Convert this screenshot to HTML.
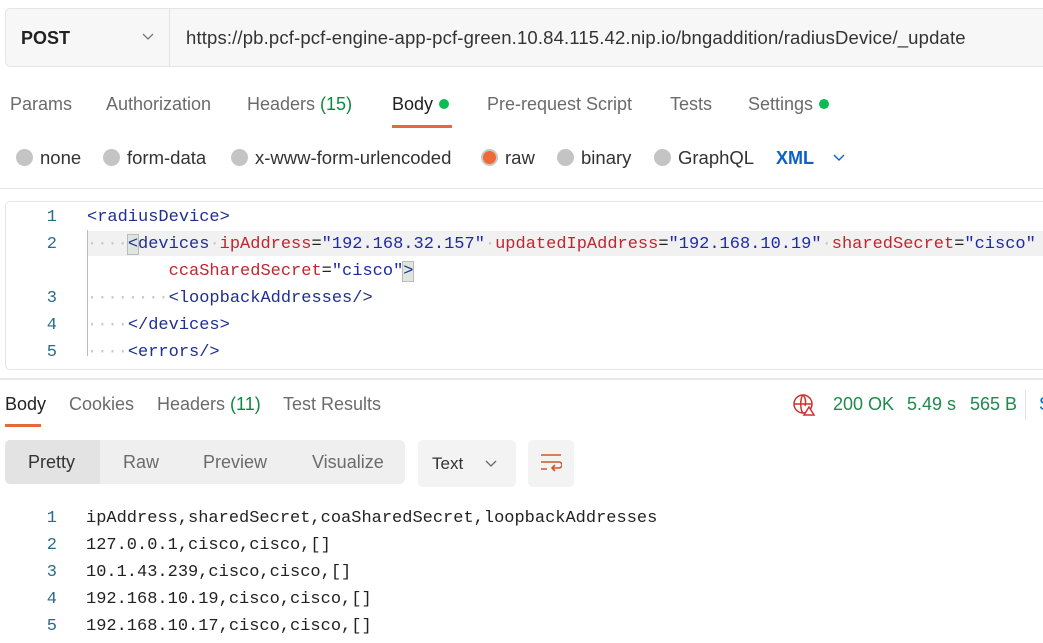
<!DOCTYPE html>
<html><head><meta charset="utf-8"><style>
*{margin:0;padding:0;box-sizing:border-box}
body{width:1043px;height:643px;overflow:hidden;background:#fff;font-family:"Liberation Sans",sans-serif;position:relative;color:#212121}
.a{position:absolute;white-space:nowrap}
.s{font-size:18px;line-height:20px}
.s2{font-size:18.5px;line-height:20px}
.g{color:#6b6b6b}
.m{font-family:"Liberation Mono",monospace;font-size:17px;line-height:27px;white-space:pre}
.ln{color:#2a6b8a;text-align:right;width:20px}
.t{color:#1f2f8f}.at{color:#c0262e}.v{color:#1c2aa8}
.dot{display:inline-block;width:10px;height:10px;border-radius:50%;background:#0cbb52;vertical-align:1px;margin-left:6px}
.r{position:absolute;width:17px;height:17px;border-radius:50%;background:#c4c4c4}
.ws{color:#c8c8c8}
</style></head><body>
<div class="a" style="left:5px;top:8px;width:1050px;height:59px;background:#f7f7f7;border:1px solid #e4e4e4;border-radius:5px"></div>
<div class="a" style="left:169px;top:9px;width:1px;height:57px;background:#e2e2e2"></div>
<div class="a s" style="left:21px;top:28px;font-weight:bold;color:#222">POST</div>
<svg class="a" style="left:142px;top:33px" width="12" height="8" viewBox="0 0 12 8"><path d="M1 1l5 5 5-5" fill="none" stroke="#777" stroke-width="1.3"/></svg>
<div class="a s2" style="left:186px;top:28px;color:#333;letter-spacing:0.15px">https://pb.pcf-pcf-engine-app-pcf-green.10.84.115.42.nip.io/bngaddition/radiusDevice/_update</div>

<div class="a s g" style="left:10px;top:94px">Params</div>
<div class="a s g" style="left:106px;top:94px">Authorization</div>
<div class="a s g" style="left:247px;top:94px">Headers <span style="color:#0a8a3f">(15)</span></div>
<div class="a s" style="left:392px;top:94px;color:#222">Body<span class="dot"></span></div>
<div class="a" style="left:392px;top:125px;width:60px;height:3px;background:#e5693c"></div>
<div class="a s g" style="left:487px;top:94px">Pre-request Script</div>
<div class="a s g" style="left:670px;top:94px">Tests</div>
<div class="a s g" style="left:748px;top:94px">Settings<span class="dot"></span></div>

<div class="r" style="left:16px;top:149px"></div><div class="a s2" style="left:40px;top:148px;color:#333">none</div>
<div class="r" style="left:103px;top:149px"></div><div class="a s2" style="left:127px;top:148px;color:#333">form-data</div>
<div class="r" style="left:231px;top:149px"></div><div class="a s2" style="left:255px;top:148px;color:#333">x-www-form-urlencoded</div>
<div class="r" style="left:481px;top:149px;background:#f06a35;border:2px solid #c8c8c8"></div><div class="a s2" style="left:505px;top:148px;color:#333">raw</div>
<div class="r" style="left:557px;top:149px"></div><div class="a s2" style="left:581px;top:148px;color:#333">binary</div>
<div class="r" style="left:654px;top:149px"></div><div class="a s2" style="left:678px;top:148px;color:#333">GraphQL</div>
<div class="a s" style="left:776px;top:148px;color:#0a62c8;font-weight:bold">XML</div>
<svg class="a" style="left:833px;top:154px" width="12" height="8" viewBox="0 0 12 8"><path d="M1 1l5 5 5-5" fill="none" stroke="#0a62c8" stroke-width="1.4"/></svg>
<div class="a" style="left:0;top:188px;width:1043px;height:1px;background:#e6e6e6"></div>

<div class="a" style="left:5px;top:201px;width:1050px;height:169px;border:1px solid #e4e4e4;border-radius:5px"></div>
<div class="a" style="left:88px;top:231px;width:960px;height:25px;background:#f1f1f1"></div>
<div class="a" style="left:87px;top:230px;width:1px;height:126px;background:#bbb"></div>
<div class="a m ln" style="left:37px;top:204px">1
2

3
4
5</div>
<div class="a m" style="left:87px;top:204px"><span class="t">&lt;radiusDevice&gt;</span>
<span class="ws">····</span><span class="t" style="background:#dfe6df;outline:1px solid #bbb">&lt;</span><span class="t">devices</span><span class="ws">·</span><span class="at">ipAddress</span>=<span class="v">"192.168.32.157"</span><span class="ws">·</span><span class="at">updatedIpAddress</span>=<span class="v">"192.168.10.19"</span><span class="ws">·</span><span class="at">sharedSecret</span>=<span class="v">"cisco"</span>
        <span class="at">ccaSharedSecret</span>=<span class="v">"cisco"</span><span class="t" style="background:#dfe6df;outline:1px solid #bbb">&gt;</span>
<span class="ws">········</span><span class="t">&lt;loopbackAddresses/&gt;</span>
<span class="ws">····</span><span class="t">&lt;/devices&gt;</span>
<span class="ws">····</span><span class="t">&lt;errors/&gt;</span></div>

<div class="a" style="left:0;top:378px;width:1043px;height:2px;background:#e8e8e8"></div>
<div class="a s" style="left:5px;top:394px;color:#222">Body</div>
<div class="a" style="left:5px;top:424px;width:36px;height:3px;background:#e5693c"></div>
<div class="a s g" style="left:69px;top:394px">Cookies</div>
<div class="a s g" style="left:157px;top:394px">Headers <span style="color:#0a8a3f">(11)</span></div>
<div class="a s g" style="left:283px;top:394px">Test Results</div>
<svg class="a" style="left:792px;top:393px" width="24" height="24" viewBox="0 0 24 24" fill="none" stroke="#d0312d" stroke-width="1.5"><circle cx="11" cy="11" r="9"/><path d="M2 11h18M11 2c-3 3-3 15 0 18M11 2c3 3 3 8 2 11"/><path d="M17 14l5 8h-10z" fill="#fff"/></svg>
<div class="a s" style="left:833px;top:394px;color:#1f8a4c">200 OK</div>
<div class="a s" style="left:907px;top:394px;color:#1f8a4c">5.49 s</div>
<div class="a s" style="left:970px;top:394px;color:#1f8a4c">565 B</div>
<div class="a" style="left:1025px;top:390px;width:1px;height:30px;background:#e2e2e2"></div>
<div class="a s" style="left:1039px;top:394px;color:#0a62c8">S</div>

<div class="a" style="left:5px;top:440px;width:400px;height:44px;background:#efefef;border-radius:5px"></div>
<div class="a" style="left:5px;top:440px;width:95px;height:44px;background:#e3e3e3;border-radius:5px 0 0 5px"></div>
<div class="a s" style="left:28px;top:452px;color:#333">Pretty</div>
<div class="a s g" style="left:123px;top:452px">Raw</div>
<div class="a s g" style="left:203px;top:452px">Preview</div>
<div class="a s g" style="left:312px;top:452px">Visualize</div>
<div class="a" style="left:418px;top:440px;width:98px;height:47px;background:#f3f3f3;border-radius:5px"></div>
<div class="a s" style="left:432px;top:454px;color:#333;font-size:17px">Text</div>
<svg class="a" style="left:485px;top:460px" width="12" height="8" viewBox="0 0 12 8"><path d="M1 1l5 5 5-5" fill="none" stroke="#666" stroke-width="1.3"/></svg>
<div class="a" style="left:528px;top:440px;width:46px;height:47px;background:#f3f3f3;border-radius:5px"></div>
<svg class="a" style="left:540px;top:452px" width="22" height="22" viewBox="0 0 22 22" fill="none" stroke="#d0572a" stroke-width="1.6"><path d="M1 3h20M1 10h18a3 3 0 0 1 0 6h-6M15 13l-3 3 3 3M1 17h6"/></svg>

<div class="a m ln" style="left:37px;top:505px">1
2
3
4
5</div>
<div class="a m" style="left:86px;top:505px;color:#222">ipAddress,sharedSecret,coaSharedSecret,loopbackAddresses
127.0.0.1,cisco,cisco,[]
10.1.43.239,cisco,cisco,[]
192.168.10.19,cisco,cisco,[]
192.168.10.17,cisco,cisco,[]</div>
</body></html>
